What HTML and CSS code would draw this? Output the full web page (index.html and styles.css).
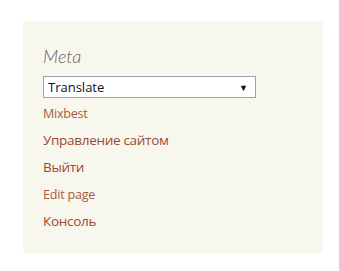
FILE: index.html
```html
<!DOCTYPE html>
<html lang="ru">
<head>
    <meta charset="UTF-8">
    <meta name="viewport" content="width=device-width, initial-scale=1.0">
    <title>Meta</title>
    <link rel="stylesheet" href="styles.css">
</head>
<body>
    <aside class="widget">
        <h2 class="widget-title">Meta</h2>
        <div class="translate">
            <span>Translate</span>
            <span class="arrow">&#9660;</span>
        </div>
        <ul class="meta-links">
            <li class="small"><a href="#">Mixbest</a></li>
            <li><a href="#">Управление сайтом</a></li>
            <li><a href="#">Выйти</a></li>
            <li class="small"><a href="#">Edit page</a></li>
            <li><a href="#">Консоль</a></li>
        </ul>
    </aside>
</body>
</html>
```

FILE: styles.css
```css
* {
    margin: 0;
    padding: 0;
    box-sizing: border-box;
}

body {
    font-family: Lato, 'Liberation Sans', sans-serif;
    background: #fff;
    padding: 21px 0 0 23px;
}

.widget {
    width: 300px;
    height: 232px;
    background: #f8f7ee;
    border-radius: 3px;
    padding: 23px 20px 0 20px;
}

.widget-title {
    font-size: 18px;
    font-weight: 300;
    font-style: italic;
    color: #666;
    line-height: 24px;
    margin-bottom: 8px;
}

.translate {
    width: 213px;
    height: 22px;
    background: #fff;
    border: 1px solid #a0a0a0;
    display: flex;
    justify-content: space-between;
    align-items: center;
    padding: 0 7px 0 4px;
    font-family: 'Open Sans', sans-serif;
    font-size: 13px;
    color: #111;
}

.translate .arrow {
    font-size: 9px;
}

.meta-links {
    list-style: none;
    margin-top: 2px;
    font-family: 'Open Sans', sans-serif;
}

.meta-links li {
    line-height: 27px;
    font-size: 13.5px;
    letter-spacing: -0.3px;
}

.meta-links li.small {
    font-size: 12.5px;
    letter-spacing: -0.2px;
}

.meta-links a {
    color: #984a30;
    text-decoration: none;
}

.meta-links li.small a {
    color: #a65a40;
}
```
